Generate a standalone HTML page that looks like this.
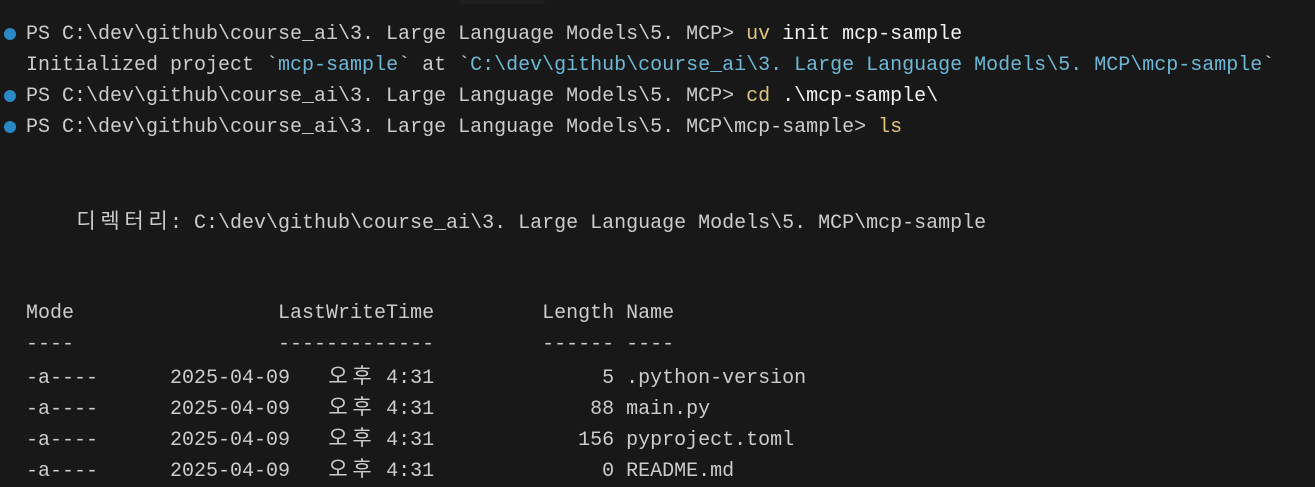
<!DOCTYPE html>
<html><head><meta charset="utf-8"><style>
html,body{margin:0;padding:0;background:#181818;width:1315px;height:487px;overflow:hidden}
.l{position:absolute;left:26px;height:31px;line-height:31px;white-space:pre;font-family:"Liberation Mono","Noto Sans CJK KR",monospace;font-size:20px;color:#cccccc;letter-spacing:0}
.k{display:inline-block;width:24px;text-align:center;font-family:"Noto Sans CJK KR",sans-serif;font-size:21px}
.c{color:#6cb8d6}.y{color:#e0c57e}.w{color:#f2f2f2}
.dot{position:absolute;left:4px;width:12px;height:12px;border-radius:50%;background:#2a89c4}
.tab{position:absolute;left:458px;top:-10px;width:88px;height:14px;border-radius:6px;background:#1f1f1f}
</style></head><body>
<div class="tab"></div>
<div class="dot" style="top:28px"></div>
<div class="dot" style="top:90px"></div>
<div class="dot" style="top:121px"></div>
<div class="l" style="top:19px">PS C:\dev\github\course_ai\3. Large Language Models\5. MCP&gt; <span class="y">uv</span> <span class="w">init mcp-sample</span></div>
<div class="l" style="top:50px">Initialized project `<span class="c">mcp-sample</span>` at `<span class="c">C:\dev\github\course_ai\3. Large Language Models\5. MCP\mcp-sample</span>`</div>
<div class="l" style="top:81px">PS C:\dev\github\course_ai\3. Large Language Models\5. MCP&gt; <span class="y">cd</span> <span class="w">.\mcp-sample\</span></div>
<div class="l" style="top:112px">PS C:\dev\github\course_ai\3. Large Language Models\5. MCP\mcp-sample&gt; <span class="y">ls</span></div>
<div class="l" style="top:205px">    <span class="k">디</span><span class="k">렉</span><span class="k">터</span><span class="k">리</span>: C:\dev\github\course_ai\3. Large Language Models\5. MCP\mcp-sample</div>
<div class="l" style="top:298px">Mode                 LastWriteTime         Length Name</div>
<div class="l" style="top:329px">----                 -------------         ------ ----</div>
<div class="l" style="top:360px">-a----      2025-04-09   <span class="k">오</span><span class="k">후</span> 4:31              5 .python-version</div>
<div class="l" style="top:391px">-a----      2025-04-09   <span class="k">오</span><span class="k">후</span> 4:31             88 main.py</div>
<div class="l" style="top:422px">-a----      2025-04-09   <span class="k">오</span><span class="k">후</span> 4:31            156 pyproject.toml</div>
<div class="l" style="top:453px">-a----      2025-04-09   <span class="k">오</span><span class="k">후</span> 4:31              0 README.md</div>
</body></html>
